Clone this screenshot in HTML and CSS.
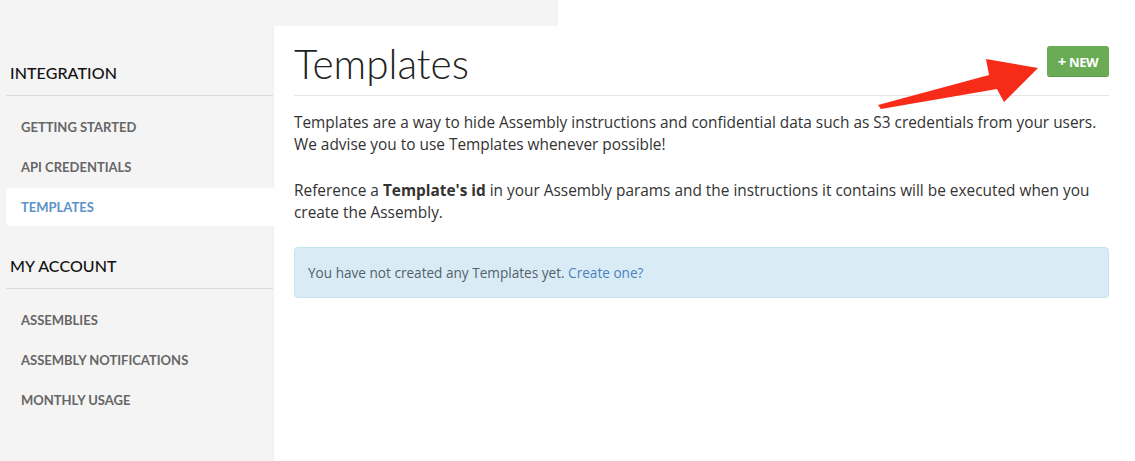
FILE: index.html
```html
<!DOCTYPE html>
<html>
<head>
<meta charset="utf-8">
<link rel="stylesheet" href="styles.css">
</head>
<body>
<div class="topbar"></div>
<div class="layout">
  <aside class="sidebar">
    <h3 class="side-heading">INTEGRATION</h3>
    <ul class="nav">
      <li class="nav-item">GETTING STARTED</li>
      <li class="nav-item">API CREDENTIALS</li>
      <li class="nav-item active">TEMPLATES</li>
    </ul>
    <h3 class="side-heading">MY ACCOUNT</h3>
    <ul class="nav">
      <li class="nav-item">ASSEMBLIES</li>
      <li class="nav-item">ASSEMBLY NOTIFICATIONS</li>
      <li class="nav-item">MONTHLY USAGE</li>
    </ul>
  </aside>
  <main class="main">
    <div class="page-header">
      <h1 class="title">Templates</h1>
      <a class="btn-new"><span class="plus">+</span> NEW</a>
    </div>
    <p class="text">Templates are a way to hide Assembly instructions and confidential data such as S3 credentials from your users. We advise you to use Templates whenever possible!</p>
    <p class="text">Reference a <strong>Template's id</strong> in your Assembly params and the instructions it contains will be executed when you create the Assembly.</p>
    <div class="alert">You have not created any Templates yet. <a class="alert-link">Create one?</a></div>
  </main>
</div>
<svg class="arrow" width="1135" height="461" viewBox="0 0 1135 461">
  <polygon points="878,105 989,75 986,59 1038,68 1004,102 997,89 881,109" fill="#f72c18"/>
</svg>
</body>
</html>
```
FILE: styles.css
```css
html, body {
  margin: 0;
  padding: 0;
  background: #ffffff;
}
body {
  position: relative;
  width: 1135px;
  height: 461px;
  overflow: hidden;
  font-family: "Open Sans", "Liberation Sans", sans-serif;
}
.topbar {
  width: 558px;
  height: 26px;
  background: #f4f4f4;
}
.layout {
  display: flex;
  height: 435px;
}
.sidebar {
  width: 267px;
  padding: 8px 0 0 6px;
  background: #f4f4f4;
  border-right: 1px solid #efefef;
  flex: none;
}
.side-heading {
  margin: 22px 0 0 0;
  padding: 8px 4px 12px;
  font-family: Lato, "Liberation Sans", sans-serif;
  font-weight: 500;
  font-size: 16px;
  line-height: 20px;
  color: #111;
  border-bottom: 1px solid #dcdcdc;
  letter-spacing: 0.1px;
}
.sidebar .side-heading:first-child {
  margin-top: 21px;
}
.nav {
  list-style: none;
  margin: 0;
  padding: 12px 0 0 0;
}
.nav-item {
  height: 38px;
  line-height: 38px;
  margin-bottom: 2px;
  padding-left: 15px;
  font-family: Lato, "Liberation Sans", sans-serif;
  font-weight: 700;
  font-size: 13px;
  color: #666;
  border-radius: 4px 0 0 4px;
}
.nav-item.active {
  background: #ffffff;
  color: #5a93c9;
  margin-right: -1px;
}
.main {
  flex: 1;
  padding: 0 26px 0 20px;
  background: #fff;
}
.page-header {
  display: flex;
  justify-content: space-between;
  align-items: flex-start;
  border-bottom: 1px solid #e6e6e6;
  height: 69px;
}
.title {
  margin: 14px 0 0 0;
  font-family: Lato, "Liberation Sans", sans-serif;
  font-weight: 300;
  font-size: 40.5px;
  line-height: 48px;
  color: #222;
}
.btn-new {
  margin-top: 20px;
  width: 62px;
  height: 31px;
  line-height: 30px;
  text-align: center;
  background: #6aab55;
  border-radius: 3px;
  color: #fff;
  font-weight: 700;
  font-size: 13px;
  letter-spacing: -0.4px;
  box-sizing: border-box;
  border-bottom: 1px solid #5e9a4b;
}
.plus {
  font-size: 15px;
}
.text {
  margin: 16px 0 24px 0;
  font-size: 15.4px;
  line-height: 22px;
  color: #333;
}
.text strong {
  font-weight: 700;
}
.alert {
  margin-top: -1px;
  padding: 15px 13px;
  line-height: 19px;
  font-size: 13.6px;
  color: #555f69;
  background: #d9ecf6;
  border: 1px solid #c4e3ef;
  border-radius: 4px;
}
.alert-link {
  color: #4a82bf;
}
.arrow {
  position: absolute;
  left: 0;
  top: 0;
  pointer-events: none;
}
```
